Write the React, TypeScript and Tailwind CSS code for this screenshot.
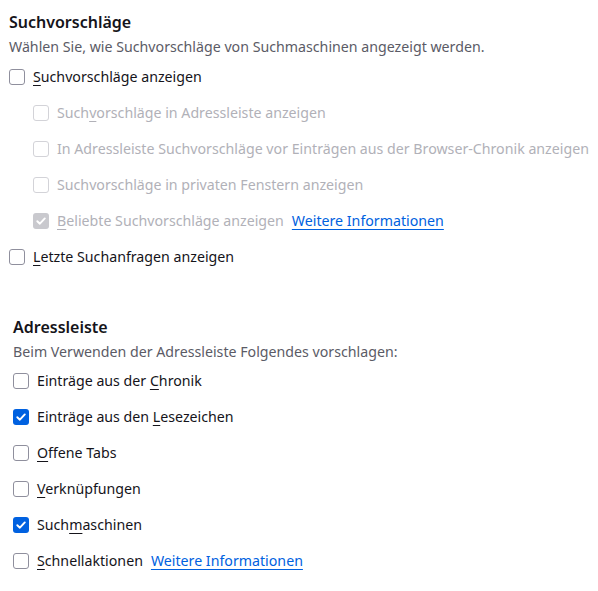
import React from "react";

type Row = {
  before: string;
  key?: string;
  after?: string;
  checked?: boolean;
  disabled?: boolean;
  indent?: boolean;
  link?: boolean;
};

function Box({ checked, disabled }: { checked?: boolean; disabled?: boolean }) {
  if (checked) {
    return (
      <span
        className={
          "flex h-4 w-4 shrink-0 items-center justify-center rounded-[3px] " +
          (disabled ? "bg-[#c9c9ce]" : "bg-[#0061e0]")
        }
      >
        <svg width="12" height="12" viewBox="0 0 12 12" fill="none">
          <path d="M2.3 6.2 L4.9 8.7 L9.8 3.4" stroke="white" strokeWidth="1.9" strokeLinecap="round" strokeLinejoin="round" />
        </svg>
      </span>
    );
  }
  return (
    <span
      className={
        "block h-4 w-4 shrink-0 rounded-[3px] border bg-white " +
        (disabled ? "border-[#d3d3d8]" : "border-[#8f8f9d]")
      }
    />
  );
}

function Option({ row }: { row: Row }) {
  return (
    <div className={"flex h-9 items-center " + (row.indent ? "pl-6" : "")}>
      <Box checked={row.checked} disabled={row.disabled} />
      <span className={"ml-2 whitespace-nowrap " + (row.disabled ? "text-[#b1b1b8]" : "text-[#15141a]")}>
        {row.before}
        {row.key && <span className="underline underline-offset-[3px]">{row.key}</span>}
        {row.after}
      </span>
      {row.link && (
        <a href="#" className="ml-2 whitespace-nowrap text-[#0061e0] underline underline-offset-[3px]">
          Weitere Informationen
        </a>
      )}
    </div>
  );
}

const search: Row[] = [
  { before: "", key: "S", after: "uchvorschläge anzeigen" },
  { before: "Such", key: "v", after: "orschläge in Adressleiste anzeigen", disabled: true, indent: true },
  { before: "In Adressleiste Suchvorschläge vor Einträgen aus der Browser-Chronik anzeigen", disabled: true, indent: true },
  { before: "Suchvorschläge in privaten Fenstern anzeigen", disabled: true, indent: true },
  { before: "", key: "B", after: "eliebte Suchvorschläge anzeigen", disabled: true, checked: true, indent: true, link: true },
  { before: "", key: "L", after: "etzte Suchanfragen anzeigen" },
];

const urlbar: Row[] = [
  { before: "Einträge aus der ", key: "C", after: "hronik" },
  { before: "Einträge aus den ", key: "L", after: "esezeichen", checked: true },
  { before: "", key: "O", after: "ffene Tabs" },
  { before: "", key: "V", after: "erknüpfungen" },
  { before: "Such", key: "m", after: "aschinen", checked: true },
  { before: "", key: "S", after: "chnellaktionen", link: true },
];

export default function App() {
  return (
    <div className="h-[591px] w-[598px] overflow-hidden bg-white text-[14.2px] font-['Noto_Sans',sans-serif]">
      <section className="pl-[9px] pt-[10px]">
        <h2 className="h-6 text-[16px] font-semibold leading-6 text-[#15141a]">Suchvorschläge</h2>
        <p className="mt-[3px] h-5 text-[14.2px] leading-5 text-[#5b5b66]">
          Wählen Sie, wie Suchvorschläge von Suchmaschinen angezeigt werden.
        </p>
        <div className="mt-[2px] flex flex-col">
          {search.map((r, i) => (
            <Option key={i} row={r} />
          ))}
        </div>
      </section>
      <section className="pl-[13px] pt-[40px]">
        <h2 className="h-6 text-[16px] font-semibold leading-6 text-[#15141a]">Adressleiste</h2>
        <p className="mt-[3px] h-5 text-[14.2px] leading-5 text-[#5b5b66]">
          Beim Verwenden der Adressleiste Folgendes vorschlagen:
        </p>
        <div className="mt-px flex flex-col">
          {urlbar.map((r, i) => (
            <Option key={i} row={r} />
          ))}
        </div>
      </section>
    </div>
  );
}
